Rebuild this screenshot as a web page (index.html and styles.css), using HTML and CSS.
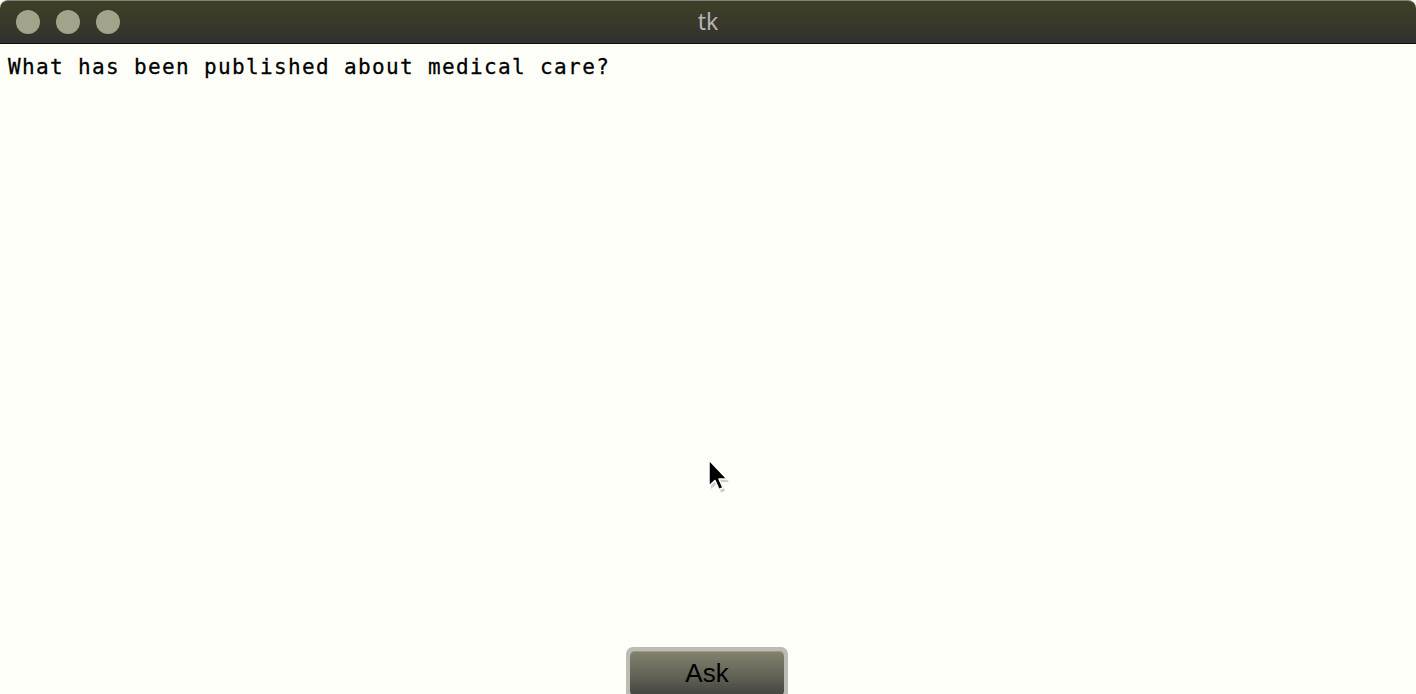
FILE: index.html
```html
<!DOCTYPE html>
<html>
<head>
<meta charset="utf-8">
<link rel="stylesheet" href="styles.css">
</head>
<body>
<div class="window">
  <div class="titlebar">
    <div class="lights">
      <span class="light"></span>
      <span class="light"></span>
      <span class="light"></span>
    </div>
    <div class="title">tk</div>
  </div>
  <div class="content">
    <div class="text">What has been published about medical care?</div>
    <div class="spacer"></div>
    <div class="footer">
      <button class="btn"><span class="btn-inner">Ask</span></button>
    </div>
  </div>
  <svg class="cursor" width="26" height="38" viewBox="0 0 26 38">
    <path d="M4 5 L4 31 L10 25.5 L14 34.5 L18 32.8 L14 24 L22 24 Z" fill="#999" opacity="0.5"/>
    <path d="M2 2 L2 28 L8 22.5 L12 31.5 L16 29.8 L12 21 L20 21 Z" fill="#000" stroke="#fff" stroke-width="1.5" stroke-linejoin="round"/>
  </svg>
</div>
</body>
</html>
```
FILE: styles.css
```css
html, body {
  margin: 0;
  padding: 0;
  width: 1416px;
  height: 694px;
  overflow: hidden;
  background: #fffffa;
}
.window {
  position: relative;
  width: 1416px;
  height: 694px;
  display: flex;
  flex-direction: column;
}
.titlebar {
  flex: none;
  height: 44px;
  box-sizing: border-box;
  position: relative;
  display: flex;
  align-items: center;
  justify-content: center;
  background: linear-gradient(#403f26, #38372b 60%, #303030);
  border-top: 1px solid #808078;
  border-bottom: 1px solid #0c0c0c;
  border-radius: 8px 8px 0 0;
}
.lights {
  position: absolute;
  left: 16px;
  top: 9px;
  display: flex;
  gap: 16px;
}
.light {
  width: 24px;
  height: 24px;
  border-radius: 50%;
  background: #a3a28a;
}
.title {
  color: #b4b4b8;
  font-family: "Noto Sans", "Open Sans", sans-serif;
  font-size: 23px;
  line-height: 1;
  margin-top: -2px;
}
.content {
  flex: 1;
  display: flex;
  flex-direction: column;
}
.text {
  font-family: "DejaVu Sans Mono", monospace;
  font-size: 21px;
  letter-spacing: 1.36px;
  color: #000;
  padding: 11px 0 0 8px;
  line-height: 24px;
  white-space: pre;
  -webkit-text-stroke: 0.3px #000;
}
.spacer {
  flex: 1;
}
.footer {
  display: flex;
  justify-content: center;
}
.btn {
  margin: 0 0 -6px -2px;
  width: 162px;
  height: 53px;
  padding: 4px;
  border: none;
  border-radius: 7px;
  background: #bcbcb4;
  box-sizing: border-box;
  display: flex;
}
.btn-inner {
  flex: 1;
  border-radius: 5px;
  background: linear-gradient(#82826e, #666658 50%, #434340);
  color: #000;
  font-family: "Liberation Sans", Arial, sans-serif;
  font-size: 26px;
  display: flex;
  justify-content: center;
  padding-top: 9px;
  line-height: 1;
  box-shadow: inset 0 1px 0 #9a9a88;
}
.cursor {
  position: absolute;
  left: 707px;
  top: 458px;
}
```
